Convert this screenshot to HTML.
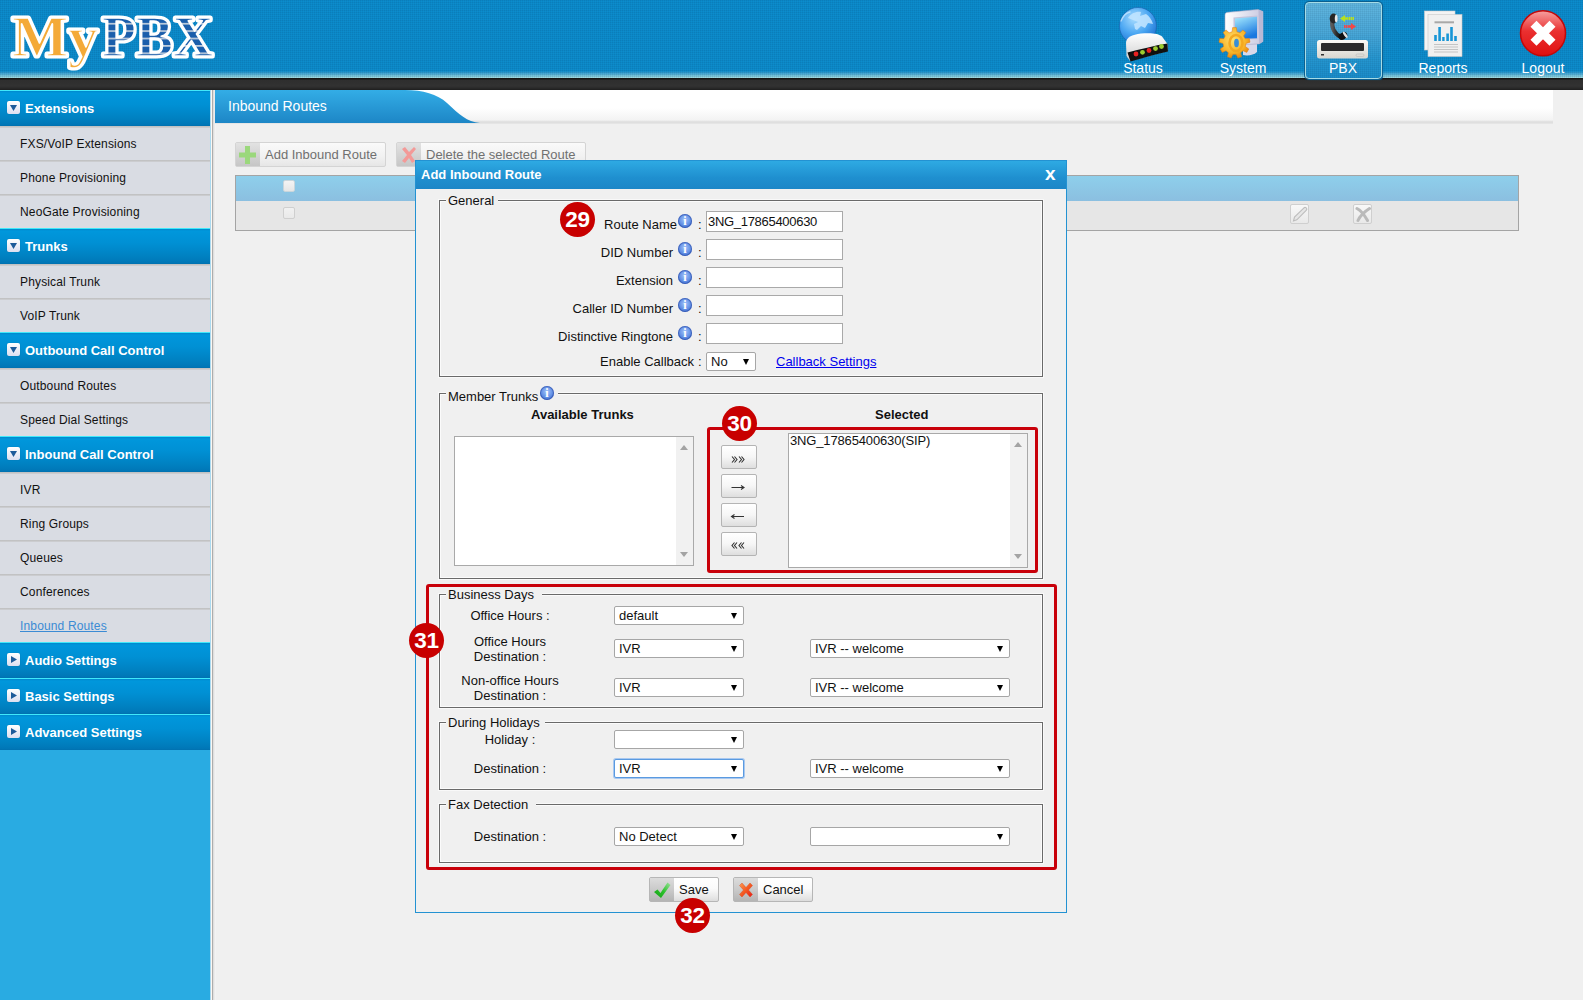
<!DOCTYPE html>
<html><head><meta charset="utf-8">
<style>
*{box-sizing:border-box}
html,body{margin:0;padding:0}
body{width:1583px;height:1000px;overflow:hidden;position:relative;background:#f0f0f0;font-family:"Liberation Sans",sans-serif;font-size:13px;color:#111}
.a{position:absolute}
#hdr{left:0;top:0;width:1583px;height:78px;
 background-image:linear-gradient(rgba(0,40,80,.07) 1px,transparent 1px),linear-gradient(90deg,rgba(0,40,80,.07) 1px,transparent 1px),linear-gradient(#0c8dcd 0,#0d8dcc 71px,#3aa2d2 73px,#7cc8dc 76px,#a6dde2 78px);
 background-size:2px 2px,2px 2px,100% 100%}
#bar{left:0;top:78px;width:1583px;height:12px;background:linear-gradient(#161616 0,#161616 1px,#2e2e2e 2px,#323232 8px,#2a2a2a 10px,#1e1e1e 12px)}
.nav{color:#fff;font-size:14px;text-align:center;line-height:16px}
#side{left:0;top:90px;width:210px;height:910px;background:#29abe2}
.mh{position:absolute;left:0;width:210px;height:36px;background:linear-gradient(#0088cc,#0097dc 2px,#0090d4 40%,#0080c0 80%,#0076b6 34px,#006fae 35px);border-top:1px solid #40e8fa;color:#fff;font-weight:bold;font-size:13px;line-height:15px}
.mh .t{position:absolute;left:25px;top:10px}
.mh .ic{position:absolute;left:7px;top:10px;width:13px;height:13px;border-radius:2px;background:linear-gradient(#ffffff,#dcdff0);box-shadow:0 0 1px rgba(0,0,0,.3)}
.mi{position:absolute;left:0;width:210px;height:34px;background:#d9dce3;color:#111;font-size:12px;line-height:14px;letter-spacing:.15px}
.mi:before{content:"";position:absolute;left:0;top:0;width:210px;height:2px;background:linear-gradient(#bdbdbd,#d0d1d5)}
.mi .t{position:absolute;left:20px;top:11px}
.fs{position:absolute;border:1px solid #6a6a6a;box-shadow:inset 0 0 0 1px #fbfbfb,0 0 0 1px #f9f9f9}
.lg{position:absolute;background:#f0f0f0;padding:0 2px;font-size:13px;line-height:15px;color:#111}
.lbl{position:absolute;font-size:13px;line-height:15px;color:#111;white-space:nowrap}
.inp{position:absolute;background:#fff;border:1px solid #a9a9a9;height:21px;width:137px;font-size:13px;line-height:15px;padding:2px 1px;letter-spacing:-0.3px}
.sel{position:absolute;background:#fff;border:1px solid #a6a6a6;border-radius:2px;height:19px;font-size:13px;line-height:15px;padding:1px 4px;white-space:nowrap}
.sel:after{content:"";position:absolute;right:6px;top:6px;border-left:3.5px solid transparent;border-right:3.5px solid transparent;border-top:6px solid #000}
.info{position:absolute;width:14px;height:14px;border-radius:50%;background:radial-gradient(circle at 50% 40%,#a4c4f8,#6a96e8 45%,#3f6fd0 80%,#3a5fb4);box-shadow:inset 0 0 0 1px rgba(40,70,160,.55)}
.info:after{content:"i";position:absolute;left:0;top:0;width:14px;text-align:center;color:#fff;font:bold 12px/15px "Liberation Serif",serif}
.badge{position:absolute;width:35px;height:35px;border-radius:50%;background:#c80000;color:#fff;font-weight:bold;font-size:22.5px;line-height:35px;text-align:center;letter-spacing:-0.3px}
.btn{position:absolute;border:1px solid #b4b4b4;border-radius:2px;background:linear-gradient(#ffffff,#f6f6f6 50%,#dedede);height:24px;width:36px;text-align:center;font-size:13px;line-height:22px;color:#222}
.lb{position:absolute;background:#fff;border:1px solid #a9a9a9}
.lb .sb{position:absolute;right:0;top:0;bottom:0;width:17px;background:#f1f1f1}
.lb .up{position:absolute;right:5px;top:8px;border-left:4px solid transparent;border-right:4px solid transparent;border-bottom:5px solid #a3a3a3}
.lb .dn{position:absolute;right:5px;bottom:8px;border-left:4px solid transparent;border-right:4px solid transparent;border-top:5px solid #a3a3a3}
.red{position:absolute;border:3px solid #c8000a;border-radius:3px}
</style></head><body>
<div id="hdr" class="a"></div>
<div id="bar" class="a"></div>
<svg class="a" style="left:0;top:0" width="230" height="78"><defs>
<pattern id="stp" patternUnits="userSpaceOnUse" x="0" y="2.5" width="10" height="7.4"><rect width="10" height="7.4" fill="#1b5eab"/><rect y="5.6" width="10" height="1.6" fill="#c9d3df"/></pattern></defs>
<g font-family="Liberation Serif" font-weight="bold" font-size="57" stroke="#fff" stroke-width="5" stroke-linejoin="round" paint-order="stroke fill">
<text x="12" y="55.5" textLength="86" lengthAdjust="spacingAndGlyphs" fill="#f4aa38">My</text>
<text x="102" y="55.5" textLength="111" lengthAdjust="spacingAndGlyphs" fill="url(#stp)">PBX</text>
</g>
<g font-family="Liberation Serif" font-weight="bold" font-size="57" stroke="#fff" stroke-width="1.6" stroke-linejoin="round" fill="none">
<text x="12" y="55.5" textLength="86" lengthAdjust="spacingAndGlyphs">My</text>
<text x="102" y="55.5" textLength="111" lengthAdjust="spacingAndGlyphs">PBX</text>
</g></svg>
<div class="a" style="left:1305px;top:2px;width:77px;height:77px;border:1px solid #a6dce6;border-radius:4px;background-image:linear-gradient(rgba(0,40,80,.06) 1px,transparent 1px),linear-gradient(90deg,rgba(0,40,80,.06) 1px,transparent 1px),linear-gradient(#62b6de,#4aa8d8 40%,#2596cf 75%,#1a8dca);background-size:2px 2px,2px 2px,100% 100%;box-shadow:0 0 0 1px #0b5f90,1px 1px 1px #0a5a88"></div>
<svg class="a" style="left:1112px;top:4px" width="60" height="58"><defs>
<radialGradient id="gl" cx="0.4" cy="0.3" r="0.75"><stop offset="0" stop-color="#a8dcff"/><stop offset=".55" stop-color="#4aa6f2"/><stop offset="1" stop-color="#1c6fd0"/></radialGradient>
<linearGradient id="rt" x1="0" y1="0" x2="0" y2="1"><stop offset="0" stop-color="#ffffff"/><stop offset="1" stop-color="#cfcfcf"/></linearGradient></defs>
<circle cx="26" cy="22" r="18.5" fill="url(#gl)" stroke="#1b5fae" stroke-width=".6"/>
<path d="M16 14C19 9 25 7 29 8L28 12L34 10C37 12 40 16 41 20L36 19L33 24L29 22L25 26L23 25L22 20L26 18Z" fill="#bfe3ff" opacity=".9"/>
<path d="M9 17C11 12 14 9 18 8" stroke="#e8f6ff" stroke-width="1.5" fill="none" stroke-linecap="round" opacity=".6"/>
<path d="M14.5 52L14 39C14 33.5 20 30.5 29 29.5C39 28.5 47 29.5 50 32.5L55.5 40L56 47L18 57Z" fill="url(#rt)"/>
<path d="M15.5 48.5C28 45.5 42 41.5 55.5 39.5L56 47.5C44 50.5 30 54 18.5 57.5Z" fill="#101010"/>
<circle cx="24" cy="50" r="2.4" fill="#e82020"/><circle cx="30.5" cy="48.3" r="2.4" fill="#9ccc30"/>
<circle cx="37" cy="46.5" r="2.4" fill="#e82020"/><circle cx="43.5" cy="44.6" r="2.4" fill="#9ccc30"/><circle cx="49.5" cy="42.5" r="2.4" fill="#9ccc30"/>
</svg>
<svg class="a" style="left:1212px;top:4px" width="60" height="58"><defs>
<linearGradient id="scr" x1="0" y1="0" x2=".4" y2="1"><stop offset="0" stop-color="#a8ecff"/><stop offset="1" stop-color="#1a78e0"/></linearGradient>
<linearGradient id="mon" x1="0" y1="0" x2="1" y2="0"><stop offset="0" stop-color="#ffffff"/><stop offset="1" stop-color="#c8c8e0"/></linearGradient>
<radialGradient id="gear" cx=".45" cy=".4" r=".6"><stop offset="0" stop-color="#ffe070"/><stop offset=".7" stop-color="#f8b428"/><stop offset="1" stop-color="#e88a10"/></radialGradient></defs>
<path d="M31 38L45 38L45 48C42 51 36 52 31 51Z" fill="#d8d8ea"/>
<path d="M13 11C13 9 14 8.5 16 8.3L46 5.5L51 7.5L51 37.5L47 40L16 41C14 41 13 40 13 38Z" fill="url(#mon)" stroke="#a8a8c8" stroke-width=".6"/><path d="M46.5 5.8L51 7.6L51 37.5L47 40Z" fill="#b9b9d6"/>
<path d="M21.5 13.5L45.5 11.5L45.5 35L21.5 36Z" fill="#c4c4dc"/><path d="M23 14.5L45 12.8L45 34.2L23 35Z" fill="url(#scr)"/>
<path d="M20.6 23.6L24.4 23.6L24.9 27.8L27.9 28.8L30.9 26.0L33.9 28.5L31.6 31.9L33.2 34.7L37.3 34.4L38.0 38.2L34.0 39.4L33.4 42.6L36.8 45.0L34.8 48.4L31.0 46.7L28.6 48.8L29.6 52.8L25.9 54.1L24.1 50.4L20.9 50.4L19.1 54.1L15.4 52.8L16.4 48.8L14.0 46.7L10.2 48.4L8.2 45.0L11.6 42.6L11.0 39.4L7.0 38.2L7.7 34.4L11.8 34.7L13.4 31.9L11.1 28.5L14.1 26.0L17.1 28.8L20.1 27.8Z" fill="url(#gear)" stroke="#e07a10" stroke-width=".5"/>
<ellipse cx="24" cy="39" rx="6.5" ry="8" fill="none" stroke="#f4a820" stroke-width="2.5"/>
<ellipse cx="24.5" cy="39" rx="2.4" ry="4.2" fill="#3a8ed6"/>
</svg>
<svg class="a" style="left:1310px;top:4px" width="65" height="58"><defs>
<linearGradient id="dev" x1="0" y1="0" x2="0" y2="1"><stop offset="0" stop-color="#fbfaf6"/><stop offset="1" stop-color="#d8d6cf"/></linearGradient></defs>
<defs><linearGradient id="hs" x1="0" y1="0" x2="1" y2="0"><stop offset="0" stop-color="#5a5a5a"/><stop offset=".5" stop-color="#2a2a2a"/><stop offset="1" stop-color="#111"/></linearGradient></defs>
<path d="M22.5 16C21 24 25 30 31 33" stroke="url(#hs)" stroke-width="4.2" fill="none" stroke-linecap="round"/>
<ellipse cx="23.5" cy="14.5" rx="3.8" ry="5" fill="#262626"/>
<ellipse cx="26.2" cy="14.5" rx="1.4" ry="3.8" fill="#e8e8e8"/>
<ellipse cx="33" cy="32" rx="4.6" ry="3.4" transform="rotate(-35 33 32)" fill="#101010"/>
<ellipse cx="35.2" cy="30.8" rx="1.3" ry="3.6" transform="rotate(-35 35.2 30.8)" fill="#e0e0e0"/>
<path d="M30 14.5L35 11V13.2H38V15.8H35V18Z" fill="#b8e020"/><rect x="38.5" y="13" width="1.5" height="3" fill="#b8e020"/><rect x="40.5" y="13" width="1.5" height="3" fill="#b8e020"/><rect x="42.5" y="13" width="1.5" height="3" fill="#b8e020"/>
<path d="M46 22.5L41 19V21.2H38V23.8H41V26Z" fill="#f04848"/><rect x="36" y="21" width="1.5" height="3" fill="#f04848"/><rect x="34" y="21" width="1.5" height="3" fill="#f04848"/>
<rect x="7" y="36" width="51" height="18.5" rx="2.5" fill="url(#dev)"/>
<rect x="11" y="39" width="43" height="8" rx="1" fill="#2a2a2a"/>
<rect x="11" y="50" width="3" height="1.5" fill="#333"/>
<rect x="46" y="50" width="8" height="2.5" rx="1.2" fill="none" stroke="#bbb" stroke-width=".6"/>
</svg>
<svg class="a" style="left:1412px;top:4px" width="60" height="58">
<rect x="12.5" y="7" width="30.5" height="39" fill="#f4f4f4" stroke="#d0d0d0" stroke-width=".6"/>
<rect x="16" y="10.5" width="34" height="42" fill="#f0f0f0" stroke="#c8c8c8" stroke-width=".6"/>
<rect x="22.5" y="17.3" width="19.5" height="2" fill="#a8a8a8"/>
<g fill="#1896d6"><rect x="22.2" y="31" width="2.6" height="6"/><rect x="26.3" y="23" width="2.6" height="14"/><rect x="30.2" y="33" width="2.4" height="4"/><rect x="34.3" y="29.5" width="2.6" height="7.5"/><rect x="38.2" y="23" width="2.6" height="14"/><rect x="42.2" y="32" width="2.6" height="5"/></g>
<g fill="#c4c4c4"><rect x="22" y="40" width="24" height="1"/><rect x="22" y="42.5" width="24" height="1"/><rect x="22" y="45" width="24" height="1"/><rect x="22" y="47.5" width="24" height="1"/></g>
</svg>
<svg class="a" style="left:1512px;top:4px" width="60" height="58"><defs>
<linearGradient id="lo" x1="0" y1="0" x2="0" y2="1"><stop offset="0" stop-color="#f6a0a0"/><stop offset=".45" stop-color="#ea3030"/><stop offset="1" stop-color="#e01010"/></linearGradient></defs>
<circle cx="31" cy="29.3" r="22.5" fill="url(#lo)" stroke="#c40808" stroke-width="1.5"/>
<path d="M21.5 19.8L40.5 38.8M40.5 19.8L21.5 38.8" stroke="#fff" stroke-width="8.5"/>
</svg>
<div class="a nav" style="left:1103px;top:60px;width:80px">Status</div>
<div class="a nav" style="left:1203px;top:60px;width:80px">System</div>
<div class="a nav" style="left:1303px;top:60px;width:80px">PBX</div>
<div class="a nav" style="left:1403px;top:60px;width:80px">Reports</div>
<div class="a nav" style="left:1503px;top:60px;width:80px">Logout</div>
<div id="side" class="a"></div>
<div class="mh" style="top:90px"><div class="ic"><svg class="a" style="left:3px;top:4px" width="7" height="6"><path d="M0 0H7L3.5 6Z" fill="#1d5b9a"/></svg></div><div class="t">Extensions</div></div>
<div class="mi" style="top:126px"><div class="t">FXS/VoIP Extensions</div></div>
<div class="mi" style="top:160px"><div class="t">Phone Provisioning</div></div>
<div class="mi" style="top:194px"><div class="t">NeoGate Provisioning</div></div>
<div class="mh" style="top:228px"><div class="ic"><svg class="a" style="left:3px;top:4px" width="7" height="6"><path d="M0 0H7L3.5 6Z" fill="#1d5b9a"/></svg></div><div class="t">Trunks</div></div>
<div class="mi" style="top:264px"><div class="t">Physical Trunk</div></div>
<div class="mi" style="top:298px"><div class="t">VoIP Trunk</div></div>
<div class="mh" style="top:332px"><div class="ic"><svg class="a" style="left:3px;top:4px" width="7" height="6"><path d="M0 0H7L3.5 6Z" fill="#1d5b9a"/></svg></div><div class="t">Outbound Call Control</div></div>
<div class="mi" style="top:368px"><div class="t">Outbound Routes</div></div>
<div class="mi" style="top:402px"><div class="t">Speed Dial Settings</div></div>
<div class="mh" style="top:436px"><div class="ic"><svg class="a" style="left:3px;top:4px" width="7" height="6"><path d="M0 0H7L3.5 6Z" fill="#1d5b9a"/></svg></div><div class="t">Inbound Call Control</div></div>
<div class="mi" style="top:472px"><div class="t">IVR</div></div>
<div class="mi" style="top:506px"><div class="t">Ring Groups</div></div>
<div class="mi" style="top:540px"><div class="t">Queues</div></div>
<div class="mi" style="top:574px"><div class="t">Conferences</div></div>
<div class="mi" style="top:608px"><div class="t" style="color:#3b8bd4;text-decoration:underline">Inbound Routes</div></div>
<div class="mh" style="top:642px"><div class="ic"><svg class="a" style="left:4px;top:3px" width="6" height="7"><path d="M0 0V7L6 3.5Z" fill="#1d5b9a"/></svg></div><div class="t">Audio Settings</div></div>
<div class="mh" style="top:678px"><div class="ic"><svg class="a" style="left:4px;top:3px" width="6" height="7"><path d="M0 0V7L6 3.5Z" fill="#1d5b9a"/></svg></div><div class="t">Basic Settings</div></div>
<div class="mh" style="top:714px"><div class="ic"><svg class="a" style="left:4px;top:3px" width="6" height="7"><path d="M0 0V7L6 3.5Z" fill="#1d5b9a"/></svg></div><div class="t">Advanced Settings</div></div>
<div class="a" style="left:210px;top:90px;width:1px;height:910px;background:#a9d9f0"></div>
<div class="a" style="left:211px;top:90px;width:1px;height:910px;background:#fbf7f2"></div>
<div class="a" style="left:212px;top:90px;width:1px;height:910px;background:#adadad"></div>
<div class="a" style="left:213px;top:90px;width:1px;height:910px;background:#dfdfdf"></div>
<div class="a" style="left:214px;top:90px;width:1px;height:910px;background:#ebebeb"></div>
<div class="a" style="left:215px;top:90px;width:1px;height:910px;background:#f3f3f3"></div>
<div class="a" style="left:215px;top:90px;width:1338px;height:34px;background:linear-gradient(#fff 0,#fff 18px,#f3f3f3 30px,#dcdcdc 32px,#e8e8e8 34px)"></div>
<svg class="a" style="left:215px;top:90px" width="270" height="33"><defs><linearGradient id="tg" x1="0" y1="0" x2="0" y2="1"><stop offset="0" stop-color="#33ade6"/><stop offset="1" stop-color="#1d86c6"/></linearGradient></defs>
<path d="M0 0H190C208 0 222 4 232 13C244 24 252 32 265 33H0Z" fill="url(#tg)"/></svg>
<div class="a" style="left:228px;top:98px;color:#fff;font-size:14px;line-height:16px">Inbound Routes</div>
<div class="a" style="left:235px;top:142px;width:151px;height:25px;border:1px solid #d4d4d4;border-radius:2px;background:linear-gradient(#fafafa,#f1f1f1 60%,#e6e6e6)"></div>
<div class="a" style="left:236px;top:143px;width:24px;height:23px;background:linear-gradient(#e2e2e2,#d4d4d4 50%,#c6c6c6)"></div>
<svg class="a" style="left:239px;top:146px" width="18" height="18"><path d="M6 0H11V6.5H17V11.5H11V18H6V11.5H0V6.5H6Z" fill="#9bd87c"/></svg>
<div class="a" style="left:265px;top:147px;font-size:13px;line-height:15px;color:#707070">Add Inbound Route</div>
<div class="a" style="left:396px;top:142px;width:190px;height:25px;border:1px solid #d4d4d4;border-radius:2px;background:linear-gradient(#fafafa,#f1f1f1 60%,#e6e6e6)"></div>
<div class="a" style="left:397px;top:143px;width:24px;height:23px;background:linear-gradient(#e2e2e2,#d4d4d4 50%,#c6c6c6)"></div>
<svg class="a" style="left:400px;top:146px" width="18" height="18"><path d="M2 3L5 1L9 6L14 1L16 3L11 9L15 15L12 17L9 12L5 17L2 15L7 9Z" fill="#f39a98"/></svg>
<div class="a" style="left:426px;top:147px;font-size:13px;line-height:15px;color:#707070">Delete the selected Route</div>
<div class="a" style="left:235px;top:175px;width:1284px;height:56px;border:1px solid #a4a4a4;background:#e6e6e6"></div>
<div class="a" style="left:236px;top:176px;width:1282px;height:25px;background:linear-gradient(#8ecfeb,#8bbfe0)"></div>
<div class="a" style="left:283px;top:180px;width:12px;height:12px;border:1px solid #c9d6dc;border-radius:2px;background:linear-gradient(#f4f4f4,#e6e6e6)"></div>
<div class="a" style="left:283px;top:207px;width:12px;height:12px;border:1px solid #cfcfcf;border-radius:2px;background:linear-gradient(#f1f1f1,#e9e9e9)"></div>
<div class="a" style="left:1290px;top:204px;width:19px;height:20px;border:1px solid #cfcfcf;border-radius:2px;background:linear-gradient(#f8f8f8,#e9e9e9)"></div>
<svg class="a" style="left:1292px;top:206px" width="16" height="16"><path d="M1.5 15L2.5 11L12 1.8C13 1 14.2 1.5 14.6 2.3C15 3 14.8 3.8 14.2 4.4L4.8 13.8Z" fill="#e6e6e6" stroke="#bdbdbd" stroke-width="1.1"/></svg>
<div class="a" style="left:1353px;top:204px;width:19px;height:20px;border:1px solid #cfcfcf;border-radius:2px;background:linear-gradient(#f8f8f8,#e9e9e9)"></div>
<svg class="a" style="left:1355px;top:206px" width="16" height="16"><path d="M2 2.5C7 5 10 10 12.5 14.5M14.5 2.5C9 6 5 10 3 14.5" stroke="#bababa" stroke-width="3" fill="none" stroke-linecap="round"/></svg>
<div class="a" style="left:415px;top:160px;width:652px;height:753px;border:1px solid #2392d2;background:#f0f0f0"></div>
<div class="a" style="left:416px;top:161px;width:650px;height:28px;background:linear-gradient(#2eaae3,#1f8fcf 60%,#1c86c7)"></div>
<div class="a" style="left:421px;top:167px;color:#fff;font-weight:bold;font-size:13px;line-height:15px">Add Inbound Route</div>
<div class="a" style="left:1045px;top:164px;color:#fff;font-weight:bold;font-size:19px;line-height:20px">x</div>
<div class="fs" style="left:439px;top:200px;width:604px;height:177px"></div>
<div class="lg" style="left:446px;top:194px;width:52px;height:14px;line-height:13px">General</div>
<div class="lbl" style="right:906px;top:217px">Route Name</div>
<div class="info" style="left:678px;top:214px"></div>
<div class="lbl" style="left:698px;top:217px">:</div>
<div class="inp" style="left:706px;top:211px">3NG_17865400630</div>
<div class="lbl" style="right:910px;top:245px">DID Number</div>
<div class="info" style="left:678px;top:242px"></div>
<div class="lbl" style="left:698px;top:245px">:</div>
<div class="inp" style="left:706px;top:239px"></div>
<div class="lbl" style="right:910px;top:273px">Extension</div>
<div class="info" style="left:678px;top:270px"></div>
<div class="lbl" style="left:698px;top:273px">:</div>
<div class="inp" style="left:706px;top:267px"></div>
<div class="lbl" style="right:910px;top:301px">Caller ID Number</div>
<div class="info" style="left:678px;top:298px"></div>
<div class="lbl" style="left:698px;top:301px">:</div>
<div class="inp" style="left:706px;top:295px"></div>
<div class="lbl" style="right:910px;top:329px">Distinctive Ringtone</div>
<div class="info" style="left:678px;top:326px"></div>
<div class="lbl" style="left:698px;top:329px">:</div>
<div class="inp" style="left:706px;top:323px"></div>
<div class="lbl" style="right:889px;top:354px">Enable Callback</div>
<div class="lbl" style="left:698px;top:354px">:</div>
<div class="sel" style="left:706px;top:352px;width:50px">No</div>
<div class="lbl" style="left:776px;top:354px;color:#0000ee;text-decoration:underline">Callback Settings</div>
<div class="fs" style="left:439px;top:393px;width:604px;height:186px"></div>
<div class="lg" style="left:446px;top:387px;width:112px;height:14px;line-height:19px">Member Trunks</div>
<div class="info" style="left:540px;top:386px"></div>
<div class="lbl" style="left:531px;top:407px;font-weight:bold">Available Trunks</div>
<div class="lbl" style="left:875px;top:407px;font-weight:bold">Selected</div>
<div class="lb" style="left:454px;top:436px;width:240px;height:130px"><div class="sb"></div><div class="up"></div><div class="dn"></div></div>
<div class="lb" style="left:788px;top:433px;width:240px;height:135px"><div class="sb"></div><div class="up"></div><div class="dn"></div></div>
<div class="lbl" style="left:790px;top:433px;letter-spacing:-0.15px">3NG_17865400630(SIP)</div>
<div class="btn" style="left:721px;top:445px"></div>
<div class="btn" style="left:721px;top:474px"></div>
<div class="btn" style="left:721px;top:503px"></div>
<div class="btn" style="left:721px;top:532px"></div>
<svg class="a" style="left:721px;top:445px" width="36" height="112" fill="none" stroke="#333" stroke-width="1.1"><path d="M11 11.5L13.5 14.5L11 17.5M13.5 11.5L16 14.5L13.5 17.5M18 11.5L20.5 14.5L18 17.5M20.5 11.5L23 14.5L20.5 17.5"/><path d="M10.5 42.5H22.5M20 40.5L23 42.5L20 44.5" /><path d="M11 71.5H23M13.5 69.5L10.5 71.5L13.5 73.5" /><path d="M13.5 97.5L11 100.5L13.5 103.5M16 97.5L13.5 100.5L16 103.5M20.5 97.5L18 100.5L20.5 103.5M23 97.5L20.5 100.5L23 103.5"/></svg>
<div class="red" style="left:707px;top:427px;width:331px;height:146px"></div>
<div class="fs" style="left:439px;top:594px;width:604px;height:114px"></div>
<div class="lg" style="left:446px;top:588px;width:96px;height:14px;line-height:13px">Business Days</div>
<div class="fs" style="left:439px;top:722px;width:604px;height:68px"></div>
<div class="lg" style="left:446px;top:716px;width:99px;height:14px;line-height:13px">During Holidays</div>
<div class="fs" style="left:439px;top:804px;width:604px;height:59px"></div>
<div class="lg" style="left:446px;top:798px;width:90px;height:14px;line-height:13px">Fax Detection</div>
<div class="lbl" style="left:410px;top:608px;width:200px;text-align:center">Office Hours :</div>
<div class="sel" style="left:614px;top:606px;width:130px">default</div>
<div class="lbl" style="left:410px;top:634px;width:200px;text-align:center">Office Hours<br>Destination :</div>
<div class="sel" style="left:614px;top:639px;width:130px">IVR</div>
<div class="sel" style="left:810px;top:639px;width:200px">IVR -- welcome</div>
<div class="lbl" style="left:410px;top:673px;width:200px;text-align:center">Non-office Hours<br>Destination :</div>
<div class="sel" style="left:614px;top:678px;width:130px">IVR</div>
<div class="sel" style="left:810px;top:678px;width:200px">IVR -- welcome</div>
<div class="lbl" style="left:410px;top:732px;width:200px;text-align:center">Holiday :</div>
<div class="sel" style="left:614px;top:730px;width:130px"></div>
<div class="lbl" style="left:410px;top:761px;width:200px;text-align:center">Destination :</div>
<div class="sel" style="left:614px;top:759px;width:130px;border-color:#5a9ae0;box-shadow:0 0 0 1px #a8c8f0">IVR</div>
<div class="sel" style="left:810px;top:759px;width:200px">IVR -- welcome</div>
<div class="lbl" style="left:410px;top:829px;width:200px;text-align:center">Destination :</div>
<div class="sel" style="left:614px;top:827px;width:130px">No Detect</div>
<div class="sel" style="left:810px;top:827px;width:200px"></div>
<div class="red" style="left:426px;top:584px;width:631px;height:286px"></div>
<div class="a" style="left:649px;top:877px;width:70px;height:25px;border:1px solid #b6b6b6;border-radius:2px;background:linear-gradient(#ffffff,#fbfbfb 45%,#e6e6e6 85%,#dcdcdc)"></div>
<div class="a" style="left:650px;top:878px;width:24px;height:23px;background:linear-gradient(#dcdcdc,#cacaca 50%,#b4b4b4)"></div>
<div class="lbl" style="left:679px;top:882px">Save</div>
<div class="a" style="left:733px;top:877px;width:80px;height:25px;border:1px solid #b6b6b6;border-radius:2px;background:linear-gradient(#ffffff,#fbfbfb 45%,#e6e6e6 85%,#dcdcdc)"></div>
<div class="a" style="left:734px;top:878px;width:24px;height:23px;background:linear-gradient(#dcdcdc,#cacaca 50%,#b4b4b4)"></div>
<div class="lbl" style="left:763px;top:882px">Cancel</div>
<svg class="a" style="left:653px;top:881px" width="18" height="18"><defs><linearGradient id="ck" x1="1" y1="0" x2="0" y2="1"><stop offset="0" stop-color="#9be29b"/><stop offset=".5" stop-color="#2cc12c"/><stop offset="1" stop-color="#12a012"/></linearGradient></defs><path d="M1 11L4.5 8.5L7.5 12L14.5 1.5L17.5 4L8 17Z" fill="url(#ck)"/></svg>
<svg class="a" style="left:737px;top:881px" width="18" height="18"><defs><linearGradient id="cx" x1="0" y1="0" x2="1" y2="1"><stop offset="0" stop-color="#ff9a50"/><stop offset=".5" stop-color="#f45a22"/><stop offset="1" stop-color="#e81818"/></linearGradient></defs><path d="M2.5 4.5L5 2L9 6.5L13 2L15.5 4.5L11.5 9L15.5 13.5L13 16L9 11.5L5 16L2.5 13.5L6.5 9Z" fill="url(#cx)" stroke="#d84010" stroke-width=".4"/></svg>
<div class="badge" style="left:560px;top:202px">29</div>
<div class="badge" style="left:722px;top:406px">30</div>
<div class="badge" style="left:409px;top:623px">31</div>
<div class="badge" style="left:675px;top:898px">32</div>
</body></html>
